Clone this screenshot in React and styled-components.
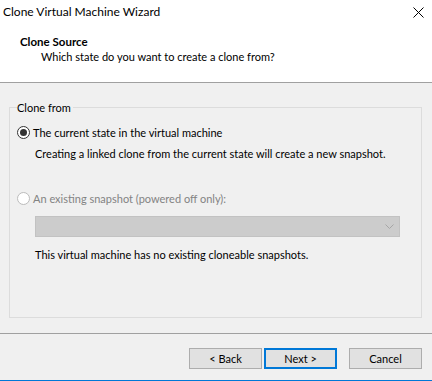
import styled, { createGlobalStyle } from "styled-components"

const GlobalStyle = createGlobalStyle`
    html, body {
        margin: 0;
        padding: 0;
        background: #f0f0f0;
    }
    body {
        font-family: "Segoe UI", Lato, "Liberation Sans", sans-serif;
        font-size: 11px;
        color: #000;
    }
`

const Window = styled.div`
    width: 432px;
    height: 381px;
    display: flex;
    flex-direction: column;
    background: #f0f0f0;
    border-bottom: 1px solid #0078d7;
    box-sizing: border-box;
`

const Header = styled.div`
    height: 83px;
    box-sizing: border-box;
    background: #fff;
    border-bottom: 1px solid #a0a0a0;
    display: flex;
    flex-direction: column;
`

const TitleBar = styled.div`
    height: 30px;
    display: flex;
    align-items: flex-start;
    justify-content: space-between;
    padding: 3px 8px 0 3px;
    box-sizing: border-box;
`

const WindowTitle = styled.span`
    font-size: 12px;
    line-height: 17px;
`

const CloseButton = styled.button`
    border: none;
    background: transparent;
    padding: 0;
    margin-top: 4px;
    width: 11px;
    height: 11px;
    display: flex;
    cursor: default;
`

const Heading = styled.div`
    font-weight: bold;
    font-size: 11.5px;
    line-height: 15px;
    padding-left: 20px;
    margin-top: 4px;
`

const SubHeading = styled.div`
    line-height: 15px;
    padding-left: 41px;
`

const Body = styled.div`
    flex: 1;
    padding: 17px 10px 0 9px;
`

const Group = styled.fieldset`
    margin: 0;
    height: 218px;
    box-sizing: border-box;
    border: 1px solid #dcdcdc;
    padding: 4px 6px 0 7px;
    display: flex;
    flex-direction: column;
`

const Legend = styled.legend`
    padding: 0 2px 0 0;
    line-height: 15px;
`

const RadioRow = styled.label`
    display: flex;
    align-items: center;
    gap: 3px;
    line-height: 15px;
    margin-top: ${p => p.$top}px;
    color: ${p => (p.$disabled ? "#838383" : "#000")};
`

const RadioMark = styled.span`
    width: 13px;
    height: 13px;
    box-sizing: border-box;
    border-radius: 50%;
    border: 1px solid ${p => (p.$disabled ? "#bcbcbc" : "#333")};
    background: #fff;
    display: flex;
    align-items: center;
    justify-content: center;

    &::after {
        content: "";
        width: 7px;
        height: 7px;
        border-radius: 50%;
        background: #333;
        display: ${p => (p.$checked ? "block" : "none")};
    }
`

const Note = styled.div`
    line-height: 15px;
    padding-left: 18px;
    margin-top: ${p => p.$top}px;
`

const Select = styled.div`
    margin: 10px 0 0 18px;
    width: 365px;
    height: 21px;
    box-sizing: border-box;
    background: #cccccc;
    border: 1px solid #c2c2c2;
    display: flex;
    align-items: center;
    justify-content: flex-end;
    padding-right: 5px;
`

const Footer = styled.div`
    margin-top: 15px;
    border-top: 1px solid #a0a0a0;
    height: 47px;
    display: flex;
    justify-content: flex-end;
    align-items: flex-start;
    padding: 14px 10px 0 0;
    box-sizing: border-box;
`

const Button = styled.button`
    width: 73px;
    height: 21px;
    box-sizing: border-box;
    margin-left: ${p => p.$gap}px;
    background: #e1e1e1;
    border: ${p => (p.$primary ? "2px solid #0078d7" : "1px solid #adadad")};
    font: inherit;
    color: #000;
    padding: 0;
    line-height: 15px;
`

const App = () => {
    return (
        <Window>
            <GlobalStyle />
            <Header>
                <TitleBar>
                    <WindowTitle>Clone Virtual Machine Wizard</WindowTitle>
                    <CloseButton aria-label="Close">
                        <svg width="11" height="11" viewBox="0 0 11 11">
                            <path d="M0.5 0.5 L10.5 10.5 M10.5 0.5 L0.5 10.5" stroke="#000" strokeWidth="1" fill="none" />
                        </svg>
                    </CloseButton>
                </TitleBar>
                <Heading>Clone Source</Heading>
                <SubHeading>Which state do you want to create a clone from?</SubHeading>
            </Header>
            <Body>
                <Group>
                    <Legend>Clone from</Legend>
                    <RadioRow $top={6}>
                        <RadioMark $checked />
                        The current state in the virtual machine
                    </RadioRow>
                    <Note $top={6}>Creating a linked clone from the current state will create a new snapshot.</Note>
                    <RadioRow $top={30} $disabled>
                        <RadioMark $disabled />
                        An existing snapshot (powered off only):
                    </RadioRow>
                    <Select>
                        <svg width="9" height="5" viewBox="0 0 9 5">
                            <path d="M0.5 0.5 L4.5 4.5 L8.5 0.5" stroke="#a6a6a6" strokeWidth="1" fill="none" />
                        </svg>
                    </Select>
                    <Note $top={10}>This virtual machine has no existing cloneable snapshots.</Note>
                </Group>
            </Body>
            <Footer>
                <Button $gap={0}>&lt; Back</Button>
                <Button $gap={2} $primary>Next &gt;</Button>
                <Button $gap={12}>Cancel</Button>
            </Footer>
        </Window>
    )
}

export default App
